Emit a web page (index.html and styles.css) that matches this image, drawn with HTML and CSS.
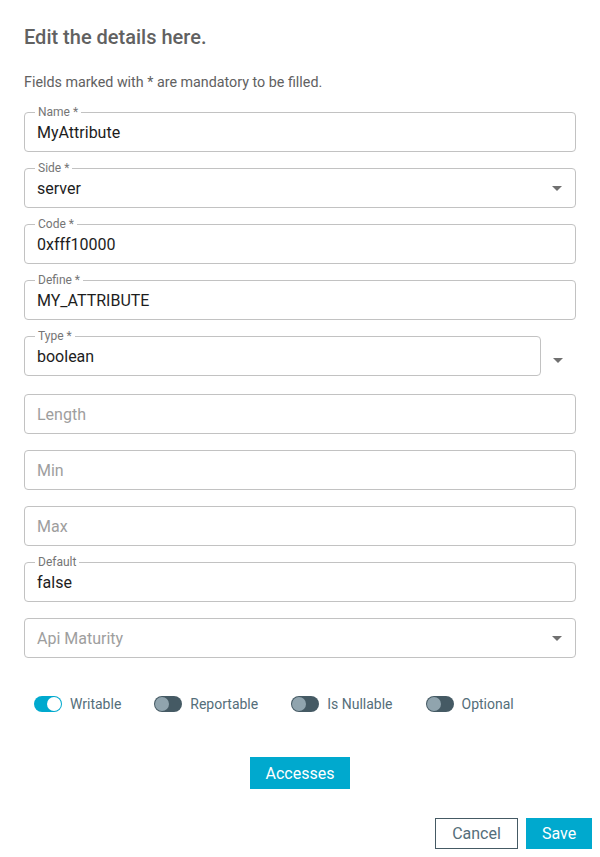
FILE: index.html
```html
<!DOCTYPE html>
<html>
<head>
<meta charset="utf-8">
<link rel="stylesheet" href="styles.css">
</head>
<body>
<div class="dialog">
  <div class="title">Edit the details here.</div>
  <div class="subtitle">Fields marked with * are mandatory to be filled.</div>
  <div class="fields">
    <div class="field"><span class="flabel">Name *</span><span class="value">MyAttribute</span></div>
    <div class="field"><span class="flabel">Side *</span><span class="value">server</span><span class="arrow"></span></div>
    <div class="field"><span class="flabel">Code *</span><span class="value">0xfff10000</span></div>
    <div class="field"><span class="flabel">Define *</span><span class="value">MY_ATTRIBUTE</span></div>
    <div class="row-type">
      <div class="field grow"><span class="flabel">Type *</span><span class="value">boolean</span></div>
      <span class="outer-arrow"><span class="arrow"></span></span>
    </div>
    <div class="field mt2"><span class="placeholder">Length</span></div>
    <div class="field"><span class="placeholder">Min</span></div>
    <div class="field"><span class="placeholder">Max</span></div>
    <div class="field"><span class="flabel">Default</span><span class="value">false</span></div>
    <div class="field"><span class="placeholder">Api Maturity</span><span class="arrow"></span></div>
  </div>
  <div class="toggles">
    <div class="toggle-item"><span class="toggle on"><span class="knob"></span></span><span class="tlabel">Writable</span></div>
    <div class="toggle-item"><span class="toggle"><span class="knob"></span></span><span class="tlabel">Reportable</span></div>
    <div class="toggle-item"><span class="toggle"><span class="knob"></span></span><span class="tlabel">Is Nullable</span></div>
    <div class="toggle-item"><span class="toggle"><span class="knob"></span></span><span class="tlabel">Optional</span></div>
  </div>
  <div class="center-row"><button class="btn primary accesses">Accesses</button></div>
  <div class="actions">
    <button class="btn outline">Cancel</button>
    <button class="btn primary">Save</button>
  </div>
</div>
</body>
</html>
```
FILE: styles.css
```css
html, body {
  margin: 0;
  padding: 0;
  background: #fff;
  font-family: Roboto, "Liberation Sans", sans-serif;
}
.dialog {
  width: 600px;
  height: 857px;
  box-sizing: border-box;
  padding: 26px 24px 0 24px;
}
.title {
  font-size: 20px;
  font-weight: 500;
  line-height: 22px;
  color: #616161;
}
.subtitle {
  margin-top: 26px;
  font-size: 14.3px;
  line-height: 16px;
  color: #616161;
}
.fields {
  margin-top: 22px;
  display: flex;
  flex-direction: column;
  gap: 16px;
}
.field {
  position: relative;
  height: 40px;
  box-sizing: border-box;
  border: 1px solid #c2c2c2;
  border-radius: 4px;
  display: flex;
  align-items: center;
  padding: 0 12px;
}
.field.mt2 { margin-top: 2px; }
.flabel {
  position: absolute;
  top: -7px;
  left: 10px;
  padding: 0 3px;
  background: #fff;
  font-size: 12px;
  line-height: 12px;
  color: #757575;
}
.value {
  font-size: 16px;
  color: #1d1d1d;
  flex: 1;
  padding-top: 1px;
}
.placeholder {
  font-size: 16px;
  color: #9e9e9e;
  flex: 1;
}
.arrow {
  width: 0;
  height: 0;
  border-left: 5px solid transparent;
  border-right: 5px solid transparent;
  border-top: 5px solid #707070;
  margin-right: 1px;
}
.row-type {
  display: flex;
  align-items: center;
}
.grow { flex: 1; }
.outer-arrow {
  width: 35px;
  display: flex;
  justify-content: center;
  padding-top: 8px;
}
.toggles {
  margin-top: 38px;
  display: flex;
  align-items: center;
  gap: 33px;
  padding-left: 10px;
  height: 16px;
}
.toggle-item {
  display: flex;
  align-items: center;
  gap: 8px;
}
.toggle {
  position: relative;
  width: 28px;
  height: 16px;
  border-radius: 8px;
  background: #455a64;
  display: inline-block;
}
.toggle .knob {
  position: absolute;
  top: 1px;
  left: 1px;
  width: 14px;
  height: 14px;
  border-radius: 50%;
  background: #90a4ae;
}
.toggle.on { background: #00a9ce; }
.toggle.on .knob {
  left: 13px;
  background: #fff;
}
.tlabel {
  font-size: 14px;
  color: #546e7a;
}
.center-row {
  margin-top: 45px;
  display: flex;
  justify-content: center;
}
.btn {
  font-family: Roboto, "Liberation Sans", sans-serif;
  font-size: 16px;
  border: none;
  padding: 0 16px;
  height: 32px;
  cursor: pointer;
}
.primary {
  background: #00a9ce;
  color: #fff;
}
.accesses { width: 100px; padding: 0; }
.actions {
  margin-top: 29px;
  margin-right: -16px;
  display: flex;
  justify-content: flex-end;
  gap: 8px;
}
.actions .btn { height: 31px; }
.outline {
  background: #fff;
  border: 1.5px solid #455a64;
  color: #546e7a;
  width: 83px;
  padding: 0;
}
.actions .primary { width: 66px; padding: 0; }
```
